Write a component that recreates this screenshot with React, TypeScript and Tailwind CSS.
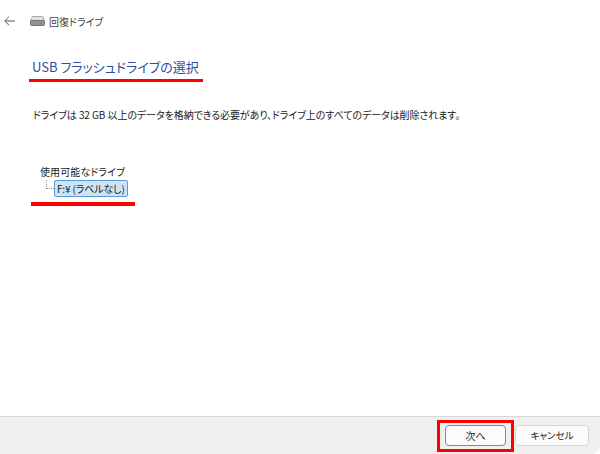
const jp = "font-['Noto_Sans_CJK_JP','Noto_Sans',sans-serif] [font-feature-settings:'palt']";

const DriveIcon = () => (
  <svg width="15" height="10" viewBox="0 0 15 10">
    <path d="M2.5.5h10l2 4.5H.5z" fill="#e2e2e2" stroke="#a8a8a8" />
    <rect x="0.5" y="4.5" width="14" height="5" rx="1" fill="#939393" stroke="#777" />
    <rect x="10" y="6" width="2" height="2" fill="#4caf50" />
  </svg>
);

const BackArrow = () => (
  <svg width="11" height="10" viewBox="0 0 11 10" fill="none" stroke="#555" strokeWidth="1">
    <path d="M11 5H1M5 .7.8 5 5 9.3" />
  </svg>
);

export default function App() {
  return (
    <div className={`relative flex h-[454px] w-[600px] flex-col overflow-hidden bg-white text-[#222] ${jp}`}>
      <div className="flex h-[42px] items-center pl-[4px]">
        <BackArrow />
        <div className="ml-[15px] flex items-center gap-[4px]">
          <DriveIcon />
          <span className="text-[10px] text-[#444]">回復ドライブ</span>
        </div>
      </div>

      <div className="flex-1 pl-[32px]">
        <h1 className="mt-[15px] inline-block text-[13px] leading-[20px] font-normal text-[#2a4f9c]">
          USB フラッシュドライブの選択
        </h1>
        <p className="mt-[30px] pl-[1px] text-[10px] leading-[16px] tracking-[-0.08px]">
          ドライブは 32 GB 以上のデータを格納できる必要があり、ドライブ上のすべてのデータは削除されます。
        </p>

        <div className="mt-[41px] pl-[8px]">
          <div className="text-[10px] leading-[16px] tracking-[0.1px]">使用可能なドライブ</div>
          <div className="flex items-center">
            <div className="mb-[8px] ml-[6px] h-[9px] w-[8px] border-b border-l border-dotted border-[#999]" />
            <span className="rounded-[2px] border border-[#5b9bd5] bg-[#cce4f7] px-[2px] text-[10px] leading-[15px] tracking-[-0.15px]">
              F:¥ (ラベルなし)
            </span>
          </div>
        </div>
      </div>

      <div className="flex h-[38px] items-center justify-end gap-[9px] rounded-br-[8px] border-t border-[#d9d9d9] bg-[#f0f0f0] pr-[11px]">
        <button className="h-[21px] w-[61px] rounded-[4px] border border-[#5b8fd0] bg-[#fbfbfb] text-[10px] text-[#222]">
          次へ
        </button>
        <button className="h-[21px] w-[74px] rounded-[4px] border border-[#d6d6d6] bg-[#fbfbfb] text-[9.5px] text-[#222]">
          キャンセル
        </button>
      </div>

      {/* red annotations */}
      <div className="absolute top-[79px] left-[29px] h-[3px] w-[174px] bg-[#f00]" />
      <div className="absolute top-[202px] left-[31px] h-[4px] w-[104px] bg-[#f00]" />
      <div className="absolute top-[420px] left-[437px] h-[32px] w-[77px] border-[3px] border-[#f00]" />
    </div>
  );
}
